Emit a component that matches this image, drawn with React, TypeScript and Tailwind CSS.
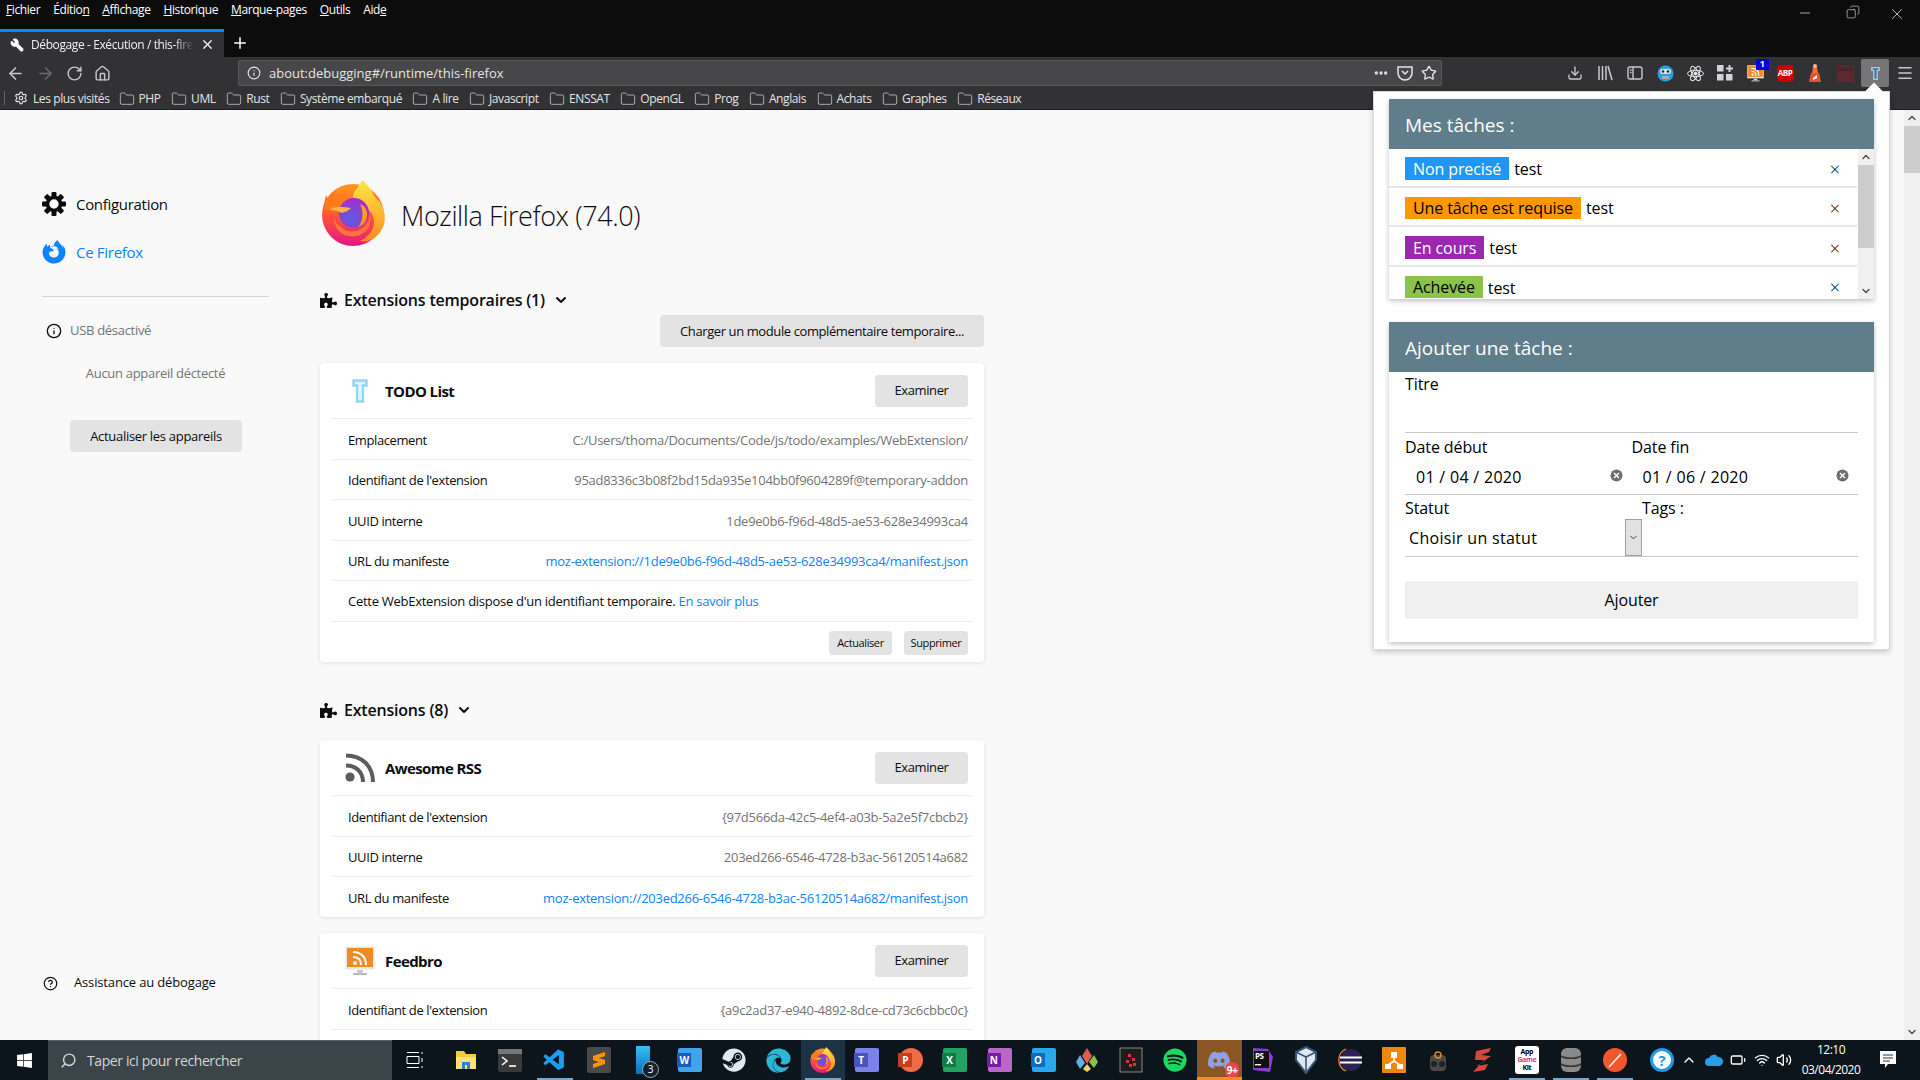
import { FC, ReactNode } from 'react';
import { ArrowLeft, ArrowRight, RotateCw, Home, Info, Folder, MoreHorizontal, Star, Menu, Download, X, Plus, Minus, ChevronDown, ChevronUp, CircleHelp, Search, Settings, Volume2, Wifi, Wrench, Copy, Battery } from 'lucide-react';
import { FaPuzzlePiece, FaWindows, FaSteam, FaSpotify, FaDiscord, FaEdge, FaFirefoxBrowser } from 'react-icons/fa';
import { VscVscode } from 'react-icons/vsc';
import { twMerge } from 'tailwind-merge';

const menus: [string, string, string][] = [
  ['', 'F', 'ichier'],
  ['Éditio', 'n', ''],
  ['', 'A', 'ffichage'],
  ['', 'H', 'istorique'],
  ['', 'M', 'arque-pages'],
  ['', 'O', 'utils'],
  ['Aid', 'e', ''],
];

const bookmarks = ['PHP', 'UML', 'Rust', 'Système embarqué', 'A lire', 'Javascript', 'ENSSAT', 'OpenGL', 'Prog', 'Anglais', 'Achats', 'Graphes', 'Réseaux'];

const FirefoxLogo: FC<{ size: number }> = ({ size }) => (
  <svg width={size} height={size} viewBox="0 0 64 66">
    <defs>
      <linearGradient id="ffa" x1="0.5" y1="0" x2="0.5" y2="1">
        <stop offset="0" stopColor="#ff9a1a" />
        <stop offset="0.55" stopColor="#ff4f3e" />
        <stop offset="1" stopColor="#e31587" />
      </linearGradient>
      <linearGradient id="ffb" x1="0.5" y1="0" x2="0.5" y2="1">
        <stop offset="0" stopColor="#ffe847" />
        <stop offset="1" stopColor="#ff8a1a" />
      </linearGradient>
      <radialGradient id="ffc" cx="0.4" cy="0.68" r="0.7">
        <stop offset="0" stopColor="#5a5fe0" />
        <stop offset="1" stopColor="#a82bcb" />
      </radialGradient>
    </defs>
    <circle cx="31" cy="35" r="31" fill="url(#ffa)" />
    <path d="M1 28 L4 15 L7 21 C8 15 10 13 12 11 C13 15 15 17 21 13 L24 20 L12 32 Z" fill="#ff7a1a" />
    <path d="M40 0 C52 10 50 16 56 20 C62 26 64 36 62 44 C58 58 46 63 38 61 C48 56 56 46 50 34 C46 26 30 22 31 16 C32 10 38 6 40 0Z" fill="url(#ffb)" />
    <path d="M12 38 C12 52 24 58 34 56 C44 54 50 46 48 36 C46 50 30 56 20 48 C16 45 13 42 12 38Z" fill="#ff8a2a" fillOpacity="0.8" />
    <circle cx="32" cy="33" r="15" fill="url(#ffc)" />
    <path d="M8 29 C14 26 22 27 29 28 C26 31 21 34 17 32 C19 31 12 31 8 29Z" fill="#ffb347" />
    <path d="M38 24 C44 26 47 33 44 40 C42 44 39 46 36 47 C41 42 42 32 38 24Z" fill="#ff9a1a" />
  </svg>
);

const GearIcon: FC = () => (
  <svg width="24" height="26" viewBox="0 0 24 26" fill="#0c0c0d">
    {[0, 45, 90, 135, 180, 225, 270, 315].map((a) => (
      <rect key={a} x="9.5" y="1" width="5" height="6" rx="1" transform={`rotate(${a} 12 13)`} />
    ))}
    <circle cx="12" cy="13" r="6.5" fill="none" stroke="#0c0c0d" strokeWidth="3.6" />
  </svg>
);

const TodoIcon: FC<{ className?: string; fill?: string }> = ({ className, fill }) => (
  <svg className={className} viewBox="0 0 16 24" fill="none">
    <path d="M1.5 1.5h13v5h-3.5v16h-6v-16h-3.5z" fill={fill ?? '#e2f4fd'} stroke="#8fd6f5" strokeWidth="2.4" />
  </svg>
);

const RssGrey: FC = () => (
  <svg width="30" height="30" viewBox="0 0 30 30" fill="none">
    <circle cx="5" cy="24" r="4.6" fill="#5c5c5c" />
    <path d="M1 12.5C11 12.5 18 19 18 29" stroke="#5c5c5c" strokeWidth="4" />
    <path d="M1 2.5C17 2.5 28 13 28 29" stroke="#5c5c5c" strokeWidth="4" />
  </svg>
);

const RssMonitor: FC<{ size: number }> = ({ size }) => (
  <svg width={size} height={size} viewBox="0 0 30 30" fill="none">
    <rect x="0.5" y="0.5" width="29" height="23" fill="#e8e8e8" />
    <rect x="2" y="2" width="26" height="19" fill="#f08a24" />
    <circle cx="10" cy="17" r="2" fill="#fff" />
    <path d="M8 11c5 0 8 3 8 8M8 6c8 0 13 5 13 13" stroke="#fff" strokeWidth="2" />
    <rect x="12" y="24" width="6" height="3" fill="#ccc" />
    <rect x="8" y="27" width="14" height="2" fill="#bbb" />
  </svg>
);

const Btn: FC<{ className?: string; children: ReactNode }> = ({ className, children }) => (
  <div className={twMerge('flex items-center justify-center pt-px bg-[#e3e3e4] rounded-sm text-[13px] text-[#0c0c0d]', className)}>{children}</div>
);

const Row: FC<{ label: string; value?: string; link?: boolean; last?: boolean }> = ({ label, value, link, last }) => (
  <div className={twMerge('mx-3 h-[40.5px] flex items-center justify-between pl-4 pr-1 pt-[3px] border-b border-[#ededf0] text-[13px]', last && 'border-b-0')}>
    <span className="text-[#0c0c0d]">{label}</span>
    <span className={twMerge('tracking-[-0.27px]', link ? 'text-[#0a84ff]' : 'text-[#737373]')}>{value}</span>
  </div>
);

const CardHead: FC<{ icon: ReactNode; name: string }> = ({ icon, name }) => (
  <div className="mx-3 h-[56px] flex items-center justify-between pr-1 border-b border-[#ededf0]">
    <div className="flex items-center">
      <div className="w-[52px] flex justify-center pl-1">{icon}</div>
      <span className="ml-px pt-px text-[15px] font-bold tracking-[-0.6px] text-[#0c0c0d]">{name}</span>
    </div>
    <Btn className="w-[93px] h-8">Examiner</Btn>
  </div>
);

const Card: FC<{ className?: string; children: ReactNode }> = ({ className, children }) => (
  <div className={twMerge('bg-white rounded shadow-[0_1px_4px_rgba(12,12,13,0.1)]', className)}>{children}</div>
);

const SectionTitle: FC<{ title: string; className?: string }> = ({ title, className }) => (
  <div className={twMerge('h-6 flex items-center text-[#0c0c0d]', className)}>
    <FaPuzzlePiece size={17} className="mr-[7px]" />
    <span className="text-[16px] font-semibold tracking-[-0.2px]">{title}</span>
    <ChevronDown size={16} strokeWidth={3} className="ml-2" />
  </div>
);

const tasks = [
  { label: 'Non precisé', bg: 'bg-[#2196f3]', fg: 'text-white', row: 'h-[39px] items-center pt-[2px]', badge: 'h-[23px]' },
  { label: 'Une tâche est requise', bg: 'bg-[#ff9800]', fg: 'text-black', row: 'h-[39px] items-center pt-[2px]', badge: 'h-[22px]' },
  { label: 'En cours', bg: 'bg-[#9c27b0]', fg: 'text-white', row: 'h-[40px] items-center pt-[3px]', badge: 'h-[23px]' },
  { label: 'Achevée', bg: 'bg-[#8bc34a]', fg: 'text-black', row: 'h-[33px] items-start pt-[9px]', badge: 'h-[22px]' },
];

const PanelHead: FC<{ title: string }> = ({ title }) => (
  <div className="h-[50px] pt-[2px] bg-[#607d8b] flex items-center pl-4 text-white text-[19px] tracking-normal">{title}</div>
);

const ClearIcon: FC = () => (
  <svg width="13" height="13" viewBox="0 0 13 13">
    <circle cx="6.5" cy="6.5" r="6" fill="#6f6f6f" />
    <path d="M4 4l5 5M9 4l-5 5" stroke="#fff" strokeWidth="1.4" />
  </svg>
);

const TodoPopup: FC = () => (
  <div className="absolute left-[1373px] top-[91px] w-[517px] h-[559px] bg-white border border-[#d8d8d8] shadow-[0_2px_6px_rgba(0,0,0,0.2)] pt-[7px] px-[15px] tracking-[-0.1px]">
    <div className="absolute left-[494px] -top-[7px] w-3 h-3 rotate-45 bg-white" />
    <div className="bg-white shadow-[0_2px_5px_rgba(0,0,0,0.25)] h-[200px] overflow-hidden">
      <PanelHead title="Mes tâches :" />
      <div className="flex h-[150px]">
        <div className="flex-1 overflow-hidden">
          {tasks.map((t) => (
            <div key={t.label} className={twMerge('pl-4 pr-[17px] flex border-b-2 border-[#e6e6e6] last:border-b-0 text-[16px]', t.row)}>
              <span className={twMerge('px-2 flex items-center', t.bg, t.fg, t.badge)}>{t.label}</span>
              <span className="ml-[5px] text-black">test</span>
              <span className="ml-auto text-[18px] font-light text-black leading-[22px]">×</span>
            </div>
          ))}
        </div>
        <div className="w-4 ml-px bg-[#f0f0f0] flex flex-col items-center text-[#505050]">
          <ChevronUp size={12} strokeWidth={3} className="my-0.5" />
          <div className="w-full h-[83px] bg-[#cdcdcd]" />
          <ChevronDown size={12} strokeWidth={3} className="mt-auto mb-0.5" />
        </div>
      </div>
    </div>
    <div className="mt-[23px] bg-white shadow-[0_2px_5px_rgba(0,0,0,0.25)] h-[320px] text-[16px] text-black">
      <PanelHead title="Ajouter une tâche :" />
      <div className="px-4">
        <div className="h-[61px] pt-px border-b border-[#c8c8c8] leading-[22px]">Titre</div>
        <div className="grid grid-cols-2 h-[62px] border-b border-[#c8c8c8]">
          {[['Date début', '01 / 04 / 2020'], ['Date fin', '01 / 06 / 2020']].map(([label, date]) => (
            <div key={label} className="pt-[3px]">
              <div className="leading-[22px]">{label}</div>
              <div className="flex items-center pl-[11px] pr-[9px] mt-[7px]">
                <span className="tracking-[0.3px]">{date}</span>
                <span className="ml-auto flex -translate-y-[2px]"><ClearIcon /></span>
              </div>
            </div>
          ))}
        </div>
        <div className="flex h-[62px] border-b border-[#c8c8c8]">
          <div className="w-[237px]">
            <div className="leading-[22px] pt-[2px]">Statut</div>
            <div className="flex items-center justify-between mt-0 pl-1">
              <span className="tracking-[0.3px]">Choisir un statut</span>
              <span className="w-[17px] h-[37px] bg-[#e1e1e1] border border-[#a0a0a0] flex items-center justify-center"><ChevronDown size={11} className="text-[#303030]" /></span>
            </div>
          </div>
          <div className="pt-[2px] leading-[22px]">Tags :</div>
        </div>
        <div className="mt-[24px] h-[38px] bg-[#f0f0f0] flex items-center justify-center">Ajouter</div>
      </div>
    </div>
  </div>
);

const Office: FC<{ back: string; front: string; letter: string }> = ({ back, front, letter }) => (
  <span className={twMerge('relative w-6 h-6 rounded-[2px]', back)}>
    <span className={twMerge('absolute -left-px top-[5px] w-[14px] h-[14px] flex items-center justify-center text-white text-[10px] font-bold', front)}>{letter}</span>
  </span>
);

const tray: ReactNode[] = [
  <svg key="tv" width="18" height="18" viewBox="0 0 18 18" fill="none" stroke="#fff"><path d="M1 1.5h12M1 16.5h12M1 5.5h12v7H1zM16 1v2M16 7v4M16 15v2" /></svg>,
  <svg key="ex" width="24" height="24" viewBox="0 0 24 24"><path d="M2 3h8l2 3h10v15H2z" fill="#f6c945" /><path d="M2 9h20v12H2z" fill="#ffdf7e" /><path d="M8 21v-7h8v7h-3v-4h-2v4z" fill="#2a86c9" /></svg>,
  <svg key="te" width="24" height="24" viewBox="0 0 24 24"><rect x="0" y="1" width="24" height="23" rx="2" fill="#3a3a3a" /><rect y="1" width="24" height="5" fill="#777" /><path d="M4 9l5 4-5 4" stroke="#fff" strokeWidth="1.6" fill="none" /><path d="M11 18h7" stroke="#fff" strokeWidth="1.6" /></svg>,
  <VscVscode key="vs" size={25} color="#1f9cf0" />,
  <svg key="su" width="24" height="26" viewBox="0 0 24 26"><rect width="24" height="26" rx="2" fill="#4a4a4a" /><path d="M6 9l12-4v4L6 13zM18 17L6 21v-4l12-4zM6 9l12 4v4L6 13z" fill="#ff9800" /></svg>,
  <div key="ph" className="relative w-6 h-7 flex justify-center"><span className="w-[14px] h-7 bg-gradient-to-b from-[#35c1f1] to-[#0d6fb8]" /><span className="absolute -right-1 -bottom-1 w-[17px] h-[17px] rounded-full bg-[#14242f] border border-[#9ab] text-white text-[10px] flex items-center justify-center">3</span></div>,
  <Office key="wo" back="bg-[#41a5ee]" front="bg-[#185abd]" letter="W" />,
  <FaSteam key="st" size={24} color="#dfe9f0" />,
  <FaEdge key="ed" size={25} color="#2bb5d8" />,
  <FirefoxLogo key="ff" size={26} />,
  <Office key="tm" back="bg-[#7b83eb]" front="bg-[#4b53bc]" letter="T" />,
  <Office key="pp" back="bg-[#ed6c47] rounded-full" front="bg-[#c43e1c]" letter="P" />,
  <Office key="xl" back="bg-[#21a366]" front="bg-[#107c41]" letter="X" />,
  <Office key="on" back="bg-[#ba68c8]" front="bg-[#7719aa]" letter="N" />,
  <Office key="ou" back="bg-[#28a8ea]" front="bg-[#0f6cbd]" letter="O" />,
  <svg key="gk" width="24" height="26" viewBox="0 0 24 26"><path d="M12 1l5 8-5 8-5-8z" fill="#e05a4e" /><path d="M5 8l5 8-5 6-4-7z" fill="#5fb0e5" /><path d="M19 8l4 7-4 6-5-6z" fill="#8cc14c" /><path d="M12 17l4 5-4 3-4-3z" fill="#f1d65c" /></svg>,
  <svg key="ja" width="24" height="26" viewBox="0 0 24 26"><rect x="1" y="1" width="22" height="24" fill="#1d1d1d" stroke="#888" /><path d="M9 7h3v3H9zM13 11h3v3h-3zM7 13h3v3H7zM14 16h3v3h-3zM10 17h3v3h-3z" fill="#d8323c" /></svg>,
  <FaSpotify key="sp" size={24} color="#1ed760" />,
  <div key="di" className="relative"><FaDiscord size={24} color="#8ea1e1" /><span className="absolute -right-2 -bottom-1.5 h-4 px-0.5 rounded-full bg-[#e8474c] text-white text-[10px] font-bold leading-4">9+</span></div>,
  <svg key="ps" width="24" height="26" viewBox="0 0 24 26"><path d="M3 1l15 1 5 8-3 15-17-2z" fill="#8a3fd0" /><rect x="4" y="4" width="15" height="17" fill="#111" /><text x="5" y="12" fontSize="8" fontWeight="700" fill="#fff">PS</text><rect x="5" y="17" width="6" height="1.4" fill="#fff" /></svg>,
  <svg key="vb" width="24" height="28" viewBox="0 0 24 28"><path d="M12 1l10 5v8l-10 13L2 14V6z" fill="#dfe8f0" stroke="#34557a" strokeWidth="2" /><path d="M12 11L2 6M12 11l10-5M12 11v16" stroke="#34557a" strokeWidth="1.6" /></svg>,
  <svg key="ec" width="26" height="26" viewBox="0 0 26 26"><circle cx="14" cy="13" r="11" fill="#2c2255" /><path d="M3 10.5h22M3 15.5h22" stroke="#fff" strokeWidth="2" /><path d="M9 2a12 12 0 000 22" stroke="#f7941e" strokeWidth="1.2" fill="none" /></svg>,
  <svg key="dr" width="24" height="26" viewBox="0 0 24 26"><rect width="24" height="26" rx="1" fill="#f08705" /><path d="M12 10v4M12 14l-6 4M12 14l6 4" stroke="#fff" strokeWidth="1.6" /><rect x="9" y="5" width="6" height="6" fill="#fff" /><rect x="3" y="17" width="6" height="5" fill="#fff" /><rect x="15" y="17" width="6" height="5" fill="#fff" /></svg>,
  <svg key="ro" width="24" height="26" viewBox="0 0 24 26"><rect x="4" y="8" width="16" height="16" rx="4" fill="#4a4a4a" /><circle cx="8" cy="17" r="3" fill="#222" /><circle cx="16" cy="17" r="3" fill="#222" /><circle cx="12" cy="8" r="3" fill="none" stroke="#e08a2e" strokeWidth="1.5" /></svg>,
  <svg key="ze" width="22" height="26" viewBox="0 0 22 26"><path d="M4 4l15-3-2 4-8 3 10 1-14 10 11-2-3 6-12 2 11-12-9 0z" fill="#d5483c" /></svg>,
  <div key="ag" className="w-6 h-7 bg-white rounded-[3px] text-[7px] leading-[8px] font-bold text-black flex flex-col items-center justify-center"><span>App</span><span className="text-[#d33a8b]">Game</span><span>Kit</span></div>,
  <svg key="db" width="24" height="28" viewBox="0 0 24 28"><rect x="2" y="2" width="20" height="24" rx="6" fill="#8a8a8a" /><path d="M2 10c4 3 16 3 20 0M2 18c4 3 16 3 20 0" stroke="#333" strokeWidth="1.6" fill="none" /></svg>,
  <svg key="pe" width="26" height="26" viewBox="0 0 26 26"><circle cx="13" cy="13" r="12" fill="#f2572b" /><path d="M7 20L19 7" stroke="#fff" strokeWidth="1.5" /></svg>,
];

const running = [3, 25, 26, 27];

const App: FC = () => (
  <div className="relative h-screen w-[1920px] flex flex-col overflow-hidden bg-[#f9f9fa] font-['Open_Sans','Liberation_Sans',sans-serif] tracking-[-0.4px]">
    {/* menu + tabs */}
    <div className="bg-[#0c0c0d] h-[57px] flex flex-col text-white shrink-0">
      <div className="h-[29px] flex items-start pl-[6px] gap-[13px] pt-[1px] text-[12px] relative">
        {menus.map(([a, b, c]) => (
          <span key={a + b + c}>{a}<span className="underline">{b}</span>{c}</span>
        ))}
        <div className="ml-auto flex items-start pt-[4px] gap-[28px] pr-[14px] text-[#eee]">
          <Minus size={16} strokeWidth={1} className="mr-[5px]" />
          <Copy size={14} strokeWidth={1} className="-scale-x-100" />
          <X size={18} strokeWidth={1} />
        </div>
      </div>
      <div className="h-[28px] flex items-stretch">
        <div className="w-[224px] bg-[#323234] border-t-[3px] border-[#0a84ff] flex items-center pl-[10px] pr-[9px] text-[12px]">
          <Wrench size={14} fill="#fff" className="shrink-0 -scale-x-100" />
          <span className="ml-[7px] w-[163px] overflow-hidden whitespace-nowrap text-[#f0f0f0] [mask-image:linear-gradient(to_right,black_88%,transparent)]">Débogage - Exécution / this-firefox</span>
          <X size={15} className="ml-auto shrink-0" />
        </div>
        <div className="w-[32px] flex items-center justify-center"><Plus size={18} /></div>
      </div>
    </div>
    {/* toolbar */}
    <div className="bg-[#323234] h-[30px] pt-[3px] flex items-start text-[#c9c9ca] shrink-0">
      <div className="w-[238px] h-[26px] flex items-center pl-[6px] gap-[11px]">
        <ArrowLeft size={19} />
        <ArrowRight size={19} className="text-[#6b6b6d]" />
        <RotateCw size={17} />
        <Home size={17} />
      </div>
      <div className="w-[1204px] h-[26px] bg-[#47474a] border border-[#58585a] rounded-[2px] flex items-center pl-2 pr-[4px] text-[13px] text-[#e5e5e5]">
        <Info size={14} />
        <span className="ml-[8px] pt-[1px] tracking-normal">about:debugging#/runtime/this-firefox</span>
        <div className="ml-auto flex items-center gap-[8px]">
          <MoreHorizontal size={16} strokeWidth={3} />
          <svg width="16" height="16" viewBox="0 0 16 16" fill="none" stroke="currentColor" strokeWidth="1.5"><path d="M1 2h14v6a7 7 0 01-14 0z" /><path d="M5 6l3 3 3-3" /></svg>
          <Star size={16} />
        </div>
      </div>
      <div className="ml-[118px] flex items-center h-[26px]">
        {[
          <Download key="d" size={16} />,
          <svg key="l" width="16" height="16" viewBox="0 0 16 16" stroke="currentColor" strokeWidth="1.5"><path d="M2 1v14M5.5 1v14M9 1v14M11 1l4 14" /></svg>,
          <svg key="s" width="16" height="16" viewBox="0 0 16 16" fill="none" stroke="currentColor" strokeWidth="1.4"><rect x="1" y="2" width="14" height="12" rx="2" /><path d="M6 2v12M3 5h1.5M3 7.5h1.5" /></svg>,
          <svg key="r" width="17" height="17" viewBox="0 0 17 17"><circle cx="8.5" cy="8.5" r="8" fill="#2aa0e0" /><rect x="3" y="4" width="11" height="5" rx="2.5" fill="#ddd" /><circle cx="6" cy="6.5" r="1.2" fill="#222" /><circle cx="11" cy="6.5" r="1.2" fill="#222" /><rect x="5" y="11" width="7" height="3" fill="#aaa" /></svg>,
          <svg key="a" width="17" height="17" viewBox="0 0 17 17" fill="none" stroke="#eee"><ellipse cx="8.5" cy="8.5" rx="8" ry="3.2" /><ellipse cx="8.5" cy="8.5" rx="8" ry="3.2" transform="rotate(60 8.5 8.5)" /><ellipse cx="8.5" cy="8.5" rx="8" ry="3.2" transform="rotate(120 8.5 8.5)" /><circle cx="8.5" cy="8.5" r="1.5" fill="#eee" /></svg>,
          <svg key="g" width="16" height="16" viewBox="0 0 16 16" fill="#d4d4d4"><rect x="0" y="0" width="6.5" height="6.5" /><rect x="0" y="9" width="6.5" height="6.5" /><rect x="9" y="9" width="6.5" height="6.5" /><path d="M11.5 0h2v2.5H16v2h-2.5V7h-2V4.5H9v-2h2.5z" /></svg>,
          <div key="f" className="relative flex"><RssMonitor size={17} /><span className="absolute -top-[6px] left-[9px] w-[13px] h-[11px] bg-[#0000e0] text-white text-[9px] font-bold flex items-center justify-center">1</span></div>,
          <span key="b" className="w-[17px] h-[17px] bg-[#c00] rounded-[4px] text-white text-[8px] font-bold flex items-center justify-center tracking-[-0.5px]">ABP</span>,
          <svg key="h" width="14" height="18" viewBox="0 0 14 18"><path d="M5 3h4l1 6H4z" fill="#f26b3a" /><path d="M3 9h8l2 9H1z" fill="#e9532b" /><path d="M5 14l4-3v3l-4 2z" fill="#fff" /><circle cx="7" cy="2" r="2" fill="#f9b9a0" /></svg>,
          <span key="c" className="w-[17px] h-[17px] bg-[#5c2a2e] text-[#1d1d1d] text-[6px] leading-[8px] text-center">Cors E</span>,
          <span key="t" className="w-[28px] h-[28px] bg-[#757577] rounded-[2px] flex items-center justify-center"><TodoIcon className="w-[9px] h-[15px]" fill="#5a6a74" /></span>,
          <Menu key="m" size={18} />,
        ].map((icon, i) => (
          <div key={i} className="w-[30px] h-[26px] flex items-center justify-center">{icon}</div>
        ))}
      </div>
    </div>
    {/* bookmarks */}
    <div className="bg-[#323234] h-[23px] pl-[4px] flex items-center border-b border-[#1d1d1f] text-[12px] text-[#e5e5e5] shrink-0">
      <span className="w-px h-[14px] bg-[#666] mr-[9px]" />
      <Settings size={14} className="mr-[5px]" />
      <span className="mr-[9px] pt-[1px]">Les plus visités</span>
      {bookmarks.map((b) => (
        <span key={b} className="flex items-center mr-[10.5px] pt-[1px]"><Folder size={16} strokeWidth={1} className="mr-[4px]" />{b}</span>
      ))}
    </div>
    {/* page */}
    <div className="flex-1 flex min-h-0 overflow-hidden">
      <div className="w-[320px] shrink-0 pl-[42px] flex flex-col pb-[45px] pt-[82px]">
        <div className="w-[227px] flex flex-col flex-1 tracking-[-0.3px]">
          <div className="h-6 flex items-center text-[15px] text-[#0c0c0d]"><GearIcon /><span className="ml-[10px]">Configuration</span></div>
          <div className="h-6 mt-6 flex items-center text-[15px] text-[#0a84ff]"><FaFirefoxBrowser size={24} /><span className="ml-[10px]">Ce Firefox</span></div>
          <div className="h-px bg-[#d7d7db] mt-[32px]" />
          <div className="h-5 mt-[24px] pl-[4px] flex items-center text-[13px] text-[#737373]"><Info size={16} className="text-[#0c0c0d]" /><span className="ml-[8px]">USB désactivé</span></div>
          <div className="h-5 mt-[23px] text-center text-[13px] text-[#737373]">Aucun appareil déctecté</div>
          <Btn className="mt-[36px] ml-[28px] w-[172px] h-8">Actualiser les appareils</Btn>
          <div className="mt-auto h-6 flex items-center pl-[1px] text-[13px] text-[#0c0c0d] tracking-[-0.15px]"><CircleHelp size={15} /><span className="ml-[16px]">Assistance au débogage</span></div>
        </div>
      </div>
      <div className="w-[664px] shrink-0 pt-[70px]">
        <div className="flex items-center h-[66px] pl-px">
          <FirefoxLogo size={66} />
          <span className="ml-[14px] pt-[7px] text-[27px] font-light text-[#0c0c0d]">Mozilla Firefox (74.0)</span>
        </div>
        <SectionTitle className="mt-[42px]" title="Extensions temporaires (1)" />
        <div className="mt-[3px] flex justify-end"><Btn className="w-[324px] h-8">Charger un module complémentaire temporaire...</Btn></div>
        <Card className="mt-4 h-[299px]">
          <CardHead icon={<TodoIcon className="w-[16px] h-[24px]" />} name="TODO List" />
          <Row label="Emplacement" value="C:/Users/thoma/Documents/Code/js/todo/examples/WebExtension/" />
          <Row label="Identifiant de l'extension" value="95ad8336c3b08f2bd15da935e104bb0f9604289f@temporary-addon" />
          <Row label="UUID interne" value="1de9e0b6-f96d-48d5-ae53-628e34993ca4" />
          <Row label="URL du manifeste" value="moz-extension://1de9e0b6-f96d-48d5-ae53-628e34993ca4/manifest.json" link />
          <div className="mx-3 h-[41px] flex items-center pl-4 pt-[2px] border-b border-[#ededf0] text-[13px] text-[#0c0c0d] tracking-[-0.27px]">
            Cette WebExtension dispose d'un identifiant temporaire.&nbsp;<span className="text-[#0a84ff]">En savoir plus</span>
          </div>
          <div className="mx-3 pr-1 pt-[9px] flex justify-end gap-3">
            <Btn className="w-[63px] h-6 text-[11px]">Actualiser</Btn>
            <Btn className="w-[64px] h-6 text-[11px]">Supprimer</Btn>
          </div>
        </Card>
        <SectionTitle className="mt-9" title="Extensions (8)" />
        <Card className="mt-[18px] h-[177px]">
          <CardHead icon={<RssGrey />} name="Awesome RSS" />
          <Row label="Identifiant de l'extension" value="{97d566da-42c5-4ef4-a03b-5a2e5f7cbcb2}" />
          <Row label="UUID interne" value="203ed266-6546-4728-b3ac-56120514a682" />
          <Row label="URL du manifeste" value="moz-extension://203ed266-6546-4728-b3ac-56120514a682/manifest.json" link last />
        </Card>
        <Card className="mt-4 h-[200px]">
          <CardHead icon={<RssMonitor size={30} />} name="Feedbro" />
          <Row label="Identifiant de l'extension" value="{a9c2ad37-e940-4892-8dce-cd73c6cbbc0c}" />
        </Card>
      </div>
      <div className="flex-1 flex justify-end">
        <div className="w-4 bg-[#f0f0f0] flex flex-col items-center text-[#505050]">
          <ChevronUp size={12} strokeWidth={3} className="my-[2px]" />
          <div className="w-full h-[47px] bg-[#cdcdcd]" />
          <ChevronDown size={12} strokeWidth={3} className="mt-auto mb-[2px]" />
        </div>
      </div>
    </div>
    {/* taskbar */}
    <div className="h-10 bg-[#0b151b] flex items-stretch text-white shrink-0">
      <div className="w-[48px] flex items-center justify-center"><FaWindows size={17} /></div>
      <div className="w-[344px] bg-[#3a4449] border-t border-[#59646a] flex items-center pl-3 text-[14px] text-[#d6d6d6]">
        <Search size={17} className="-scale-x-100" />
        <span className="ml-[10px]">Taper ici pour rechercher</span>
      </div>
      <div className="pl-[1px] flex items-stretch">
        {tray.map((icon, i) => (
          <div
            key={i}
            className={twMerge(
              'relative w-[44.2px] flex items-center justify-center',
              i === 0 && 'mr-[7px]',
              i === 5 && 'mr-[3px]',
              i === 15 && '-ml-px',
              i === 18 && '-mr-[2px]',
              i === 9 && 'bg-[#1b3345]',
              i === 18 && 'bg-[#8a5624]'
            )}
          >
            {icon}
            {(i === 9 || running.includes(i)) && <span className="absolute bottom-0 left-1 right-1 h-[2px] bg-[#7fa6c0]" />}
            {i === 18 && <span className="absolute bottom-0 left-0 right-0 h-[3px] bg-[#ff8c1a]" />}
          </div>
        ))}
      </div>
      <div className="ml-auto flex items-center">
        <span className="w-[24px] h-[24px] rounded-full bg-white border-[3px] border-[#1c9be6] text-[#1c9be6] text-[15px] font-bold flex items-center justify-center mr-[7px]">?</span>
        <ChevronUp size={16} className="mr-[8px]" />
        <svg width="18" height="12" viewBox="0 0 18 12" className="mr-[7px]"><path d="M4 12a4 4 0 010-8 5 5 0 019-1 4.5 4.5 0 011 9z" fill="#2b9de8" /></svg>
        <Battery size={16} className="mr-[8px]" />
        <Wifi size={16} className="mr-[6px]" />
        <Volume2 size={16} />
        <div className="w-[78px] text-center text-[12px] leading-[20px] tracking-[-0.5px]"><div>12:10</div><div>03/04/2020</div></div>
        <div className="w-[36px] mr-[14px] flex justify-center">
          <svg width="18" height="20" viewBox="0 0 18 20"><path d="M1 1h16v13H9l-3 4v-4H1z" fill="#fff" /><path d="M4 5h10M4 8h10M4 11h7" stroke="#333" /></svg>
        </div>
      </div>
    </div>
    <TodoPopup />
  </div>
);

export default App;
